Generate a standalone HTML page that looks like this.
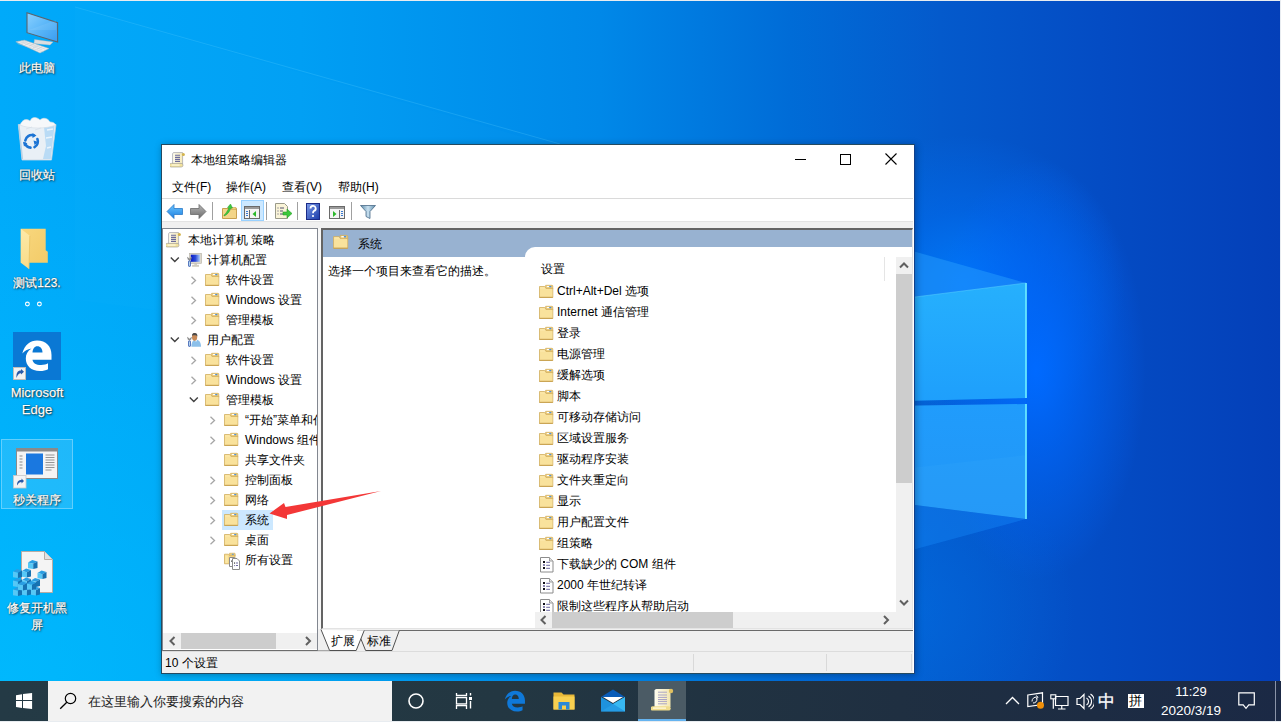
<!DOCTYPE html>
<html><head><meta charset="utf-8">
<style>
*{margin:0;padding:0;box-sizing:border-box}
html,body{width:1281px;height:722px;overflow:hidden}
body{position:relative;font-family:"Liberation Sans",sans-serif;font-size:12px;color:#000;background:#0070dc}
.a{position:absolute}
.t{position:absolute;white-space:nowrap;line-height:14px;font-size:12px;color:#000}
#bg{position:absolute;left:0;top:0;width:1281px;height:722px;
background:
radial-gradient(ellipse 110px 210px at 1036px 370px,rgba(0,106,255,1) 0%,rgba(0,102,250,0.6) 45%,rgba(0,90,230,0) 100%),
radial-gradient(ellipse 160px 150px at 965px 285px,rgba(0,124,255,0.9) 0%,rgba(0,112,248,0.45) 50%,rgba(0,90,230,0) 100%),
radial-gradient(ellipse 160px 160px at 915px 610px,rgba(0,112,230,0.45) 0%,rgba(0,100,220,0) 100%),
radial-gradient(ellipse 520px 560px at 0px 722px,rgba(0,195,255,0.6) 0%,rgba(0,190,255,0) 100%),
linear-gradient(to right,#00aafa 0px,#009ff4 300px,#0088e8 600px,#006cd7 790px,#045acc 940px,#044cc4 1100px,#043fb8 1281px);}
.dk{position:absolute;color:#fff;font-size:12px;line-height:17px;text-align:center;width:74px;left:0;text-shadow:0 0 1px rgba(0,0,0,.9),1px 1px 2px rgba(0,0,0,.8);-webkit-text-stroke:0.25px #fff}
#win{position:absolute;left:161px;top:144px;width:754px;height:530px;background:#fff;border:1px solid #244a60;border-right-color:#12408a;box-shadow:1px 1px 7px rgba(0,0,0,.3)}
#taskbar{position:absolute;left:0;top:681px;width:1281px;height:41px;background:linear-gradient(to right,#243a45 0px,#233742 500px,#1f2f41 900px,#1b2945 1281px)}
.row{position:absolute;height:20px;line-height:20px;white-space:nowrap;font-size:12px}
.lrow{position:absolute;height:21px;line-height:21px;white-space:nowrap;font-size:12px}
.tofu .c{letter-spacing:0.25em}
</style></head><body>
<svg width="0" height="0" style="position:absolute">
<defs>
 <symbol id="fold" viewBox="0 0 16 16">
  <path d="M7.6,1.3 h6.4 a0.8,0.8 0 0 1 0.8,0.8 v3 h-7.2z" fill="#eccb78" stroke="#d2ad5c" stroke-width="0.7"/>
  <rect x="8.8" y="2" width="2.6" height="1.1" fill="#fff"/><rect x="11.1" y="1.9" width="2.3" height="1.3" rx="0.6" fill="#4a90e0"/>
  <path d="M1.5,2.5 h5.2 l1.2,1.9 h6.9 v9.1 h-13.3z" fill="#f8df98" stroke="#d2ae5e" stroke-width="0.8"/>
  <path d="M2.1,3.1 h4.3 l1.2,1.9 h6.6 v8 h-12.1z" fill="#fbe6a6"/>
  <path d="M2.1,5 h12.1 v7.9 h-12.1z" fill="#f8dd92" fill-opacity="0.5"/>
  <path d="M1.4,13.3 h13.4" stroke="#c49c4a" stroke-width="0.9"/>
 </symbol>
 <symbol id="scroll" viewBox="0 0 16 16">
  <defs><linearGradient id="scg" x1="0" y1="0" x2="1" y2="0"><stop offset="0" stop-color="#fffdf0"/><stop offset="1" stop-color="#f6eab8"/></linearGradient></defs>
  <path d="M2.6,1.6 Q2.8,0.6 4,0.6 H12.6 V12 H2.6z" fill="url(#scg)" stroke="#a8a8b0" stroke-width="0.8"/>
  <circle cx="13.4" cy="2.4" r="1.5" fill="#d4b44c"/>
  <path d="M1.2,11.4 H11.2 a1.8,1.8 0 0 1 0,3.6 H1.2 a1.8,1.8 0 0 1 0,-3.6z" fill="#f2e29c" stroke="#a8a498" stroke-width="0.7"/>
  <rect x="1.6" y="12.5" width="8" height="1.1" fill="#fffbe6"/>
  <path d="M5,3.3 h5 M5,5.4 h5 M5,7.4 h5 M5,9.4 h5" stroke="#6a6a9a" stroke-width="1.1"/>
 </symbol>
 <symbol id="doc" viewBox="0 0 16 16">
  <path d="M2.5,0.5 H11.5 L15,4 V15 H2.5z" fill="#fff" stroke="#8c8c8c"/>
  <path d="M11.5,0.5 V4 H15" fill="#e4e4e4" stroke="#9c9c9c"/>
  <rect x="5" y="4" width="2" height="2" fill="#101018"/><rect x="5" y="7" width="2" height="2" fill="#8a86b0"/><rect x="5" y="10" width="2" height="2" fill="#101018"/>
  <path d="M8.2,5.3 h3.8 M8.2,8.3 h3.8 M8.2,11.3 h3.8" stroke="#6c68a0" stroke-width="1"/>
 </symbol>
</defs></svg>
<div id="bg"></div>
<svg class="a" style="left:0;top:0" width="1281" height="722" viewBox="0 0 1281 722">
  <defs>
    <linearGradient id="pt" x1="0" y1="0" x2="0" y2="1">
      <stop offset="0" stop-color="#26b0fd"/><stop offset="1" stop-color="#1e9ffc"/>
    </linearGradient>
    <linearGradient id="pb" x1="0" y1="0" x2="0" y2="1">
      <stop offset="0" stop-color="#209cfc"/><stop offset="1" stop-color="#2296f6"/>
    </linearGradient>
    <linearGradient id="ray" x1="0" y1="0" x2="1" y2="0">
      <stop offset="0" stop-color="#40c0ff" stop-opacity="0.0"/><stop offset="1" stop-color="#40b0ff" stop-opacity="0.35"/>
    </linearGradient>
  </defs>
  <polygon points="75,7 1026,283 1026,420 75,300" fill="#40c8ff" fill-opacity="0.035"/><line x1="75" y1="7" x2="560" y2="144" stroke="#6ad8ff" stroke-opacity="0.22" stroke-width="1"/>
  <polygon points="820,225 1026,283 820,309" fill="#2aa0ff" fill-opacity="0.45"/>
  <polygon points="820,493 1026,519 820,575" fill="#1a90ff" fill-opacity="0.35"/>
  <polygon points="820,309 1026,283 1026,398 820,403" fill="url(#pt)"/>
  <polygon points="820,407 1026,404 1026,519 820,493" fill="url(#pb)"/>
  <polygon points="820,478 1026,455 1026,519 820,493" fill="#40b8ff" fill-opacity="0.12"/>
  <line x1="1026" y1="283" x2="1026" y2="398" stroke="#66e6ff" stroke-width="1.8"/>
  <line x1="1026" y1="404" x2="1026" y2="519" stroke="#66e6ff" stroke-width="1.8"/>
  <line x1="820" y1="309" x2="1026" y2="283" stroke="#60d8ff" stroke-opacity="0.5" stroke-width="1"/>
</svg>
<div class="a" style="left:0;top:0;width:1281px;height:1px;background:#e8ecf0"></div>
<div class="a" style="left:1280px;top:0;width:1px;height:722px;background:#e8ecf0"></div>

<div id="win"></div>
<svg class="a" style="left:170px;top:152px" width="16" height="16"><use href="#scroll"/></svg>
<div class="t" style="left:191px;top:153px"><span class="c">本地组策略编辑器</span></div>
<div class="a" style="left:795px;top:159px;width:11px;height:1px;background:#000"></div>
<div class="a" style="left:840px;top:154px;width:11px;height:11px;border:1px solid #000"></div>
<svg class="a" style="left:885px;top:153px" width="12" height="12"><path d="M0.5,0.5 L11.5,11.5 M11.5,0.5 L0.5,11.5" stroke="#000" stroke-width="1.1"/></svg>
<div class="t" style="left:172px;top:180px"><span class="c">文件</span>(F)</div>
<div class="t" style="left:226px;top:180px"><span class="c">操作</span>(A)</div>
<div class="t" style="left:282px;top:180px"><span class="c">查看</span>(V)</div>
<div class="t" style="left:338px;top:180px"><span class="c">帮助</span>(H)</div>
<div class="a" style="left:162px;top:198px;width:751px;height:1px;background:#dadada"></div>
<div class="a" style="left:162px;top:221px;width:751px;height:1px;background:#e3e3e3"></div>
<div class="a" style="left:162px;top:222px;width:751px;height:451px;background:#f0f0f0"></div>
<div class="a" style="left:162px;top:228px;width:156px;height:423px;background:#fff;border:1px solid #828790;border-bottom-color:#6d6d6d"></div>
<div class="a" style="left:163px;top:229px;width:154px;height:404px;overflow:hidden">
<svg class="a" style="left:3px;top:3px" width="16" height="16"><use href="#scroll"/></svg>
<div class="row" style="left:25px;top:1px"><span class="c">本地计算机</span> <span class="c">策略</span></div>
<svg class="a" style="left:7px;top:27px" width="10" height="8"><path d="M0.8,1.5 L4.8,5.5 L8.8,1.5" fill="none" stroke="#404040" stroke-width="1.4"/></svg>
<svg class="a" style="left:22px;top:23px" width="17" height="16"><defs><linearGradient id="scrn" x1="0" y1="0" x2="1" y2="0"><stop offset="0" stop-color="#0a1ac8"/><stop offset="0.5" stop-color="#2a4ad8"/><stop offset="1" stop-color="#b0d0f8"/></linearGradient></defs><rect x="4.4" y="1.3" width="12.2" height="10" fill="#dcd8cc" stroke="#b4b0a4" stroke-width="0.6"/><rect x="5.8" y="2.7" width="9.2" height="7.1" fill="url(#scrn)"/><rect x="9.3" y="11.3" width="2.7" height="1.5" fill="#c8c4b8"/><rect x="7.1" y="12.8" width="6.9" height="2" fill="#d0ccc0"/><path d="M2,4.8 L2.8,7.5 L4.5,8.6 L6.2,7.5 L7,4.8 L5.8,5.6 L4.5,6.8 L3.2,5.6z" fill="#8a8a8a"/><rect x="3.2" y="8.6" width="2.6" height="6.2" rx="1.1" fill="#2f58b0"/><rect x="4.1" y="9.4" width="0.9" height="4.4" fill="#c8e4f8"/></svg>
<div class="row" style="left:44px;top:21px"><span class="c">计算机配置</span></div>
<svg class="a" style="left:27px;top:47px" width="8" height="9"><path d="M1.5,0.8 L5.5,4.5 L1.5,8.2" fill="none" stroke="#a6a6a6" stroke-width="1.3"/></svg>
<svg class="a" style="left:41px;top:43px" width="16" height="16"><use href="#fold"/></svg>
<div class="row" style="left:63px;top:41px"><span class="c">软件设置</span></div>
<svg class="a" style="left:27px;top:67px" width="8" height="9"><path d="M1.5,0.8 L5.5,4.5 L1.5,8.2" fill="none" stroke="#a6a6a6" stroke-width="1.3"/></svg>
<svg class="a" style="left:41px;top:63px" width="16" height="16"><use href="#fold"/></svg>
<div class="row" style="left:63px;top:61px">Windows <span class="c">设置</span></div>
<svg class="a" style="left:27px;top:87px" width="8" height="9"><path d="M1.5,0.8 L5.5,4.5 L1.5,8.2" fill="none" stroke="#a6a6a6" stroke-width="1.3"/></svg>
<svg class="a" style="left:41px;top:83px" width="16" height="16"><use href="#fold"/></svg>
<div class="row" style="left:63px;top:81px"><span class="c">管理模板</span></div>
<svg class="a" style="left:7px;top:107px" width="10" height="8"><path d="M0.8,1.5 L4.8,5.5 L8.8,1.5" fill="none" stroke="#404040" stroke-width="1.4"/></svg>
<svg class="a" style="left:22px;top:103px" width="17" height="16"><path d="M6.4,14.8 C6.4,10 8,7.8 11,7.8 C14,7.8 16,10 16,14.8z" fill="#8cc0ea"/><path d="M10,8 L11,10 L12,8z" fill="#fff"/><ellipse cx="9.6" cy="5" rx="2.6" ry="3.8" fill="#c88a58"/><path d="M7,3.8 C7,1.4 8.5,1 9.8,1 C11.5,1 12.6,2 12.4,4.6 C11.5,3.2 10,3 7,3.8z" fill="#4a4a4a"/><path d="M2,4.8 L2.8,7.5 L4.5,8.6 L6.2,7.5 L7,4.8 L5.8,5.6 L4.5,6.8 L3.2,5.6z" fill="#8a8a8a"/><rect x="3.2" y="8.6" width="2.6" height="6.2" rx="1.1" fill="#2f58b0"/><rect x="4.1" y="9.4" width="0.9" height="4.4" fill="#c8e4f8"/></svg>
<div class="row" style="left:44px;top:101px"><span class="c">用户配置</span></div>
<svg class="a" style="left:27px;top:127px" width="8" height="9"><path d="M1.5,0.8 L5.5,4.5 L1.5,8.2" fill="none" stroke="#a6a6a6" stroke-width="1.3"/></svg>
<svg class="a" style="left:41px;top:123px" width="16" height="16"><use href="#fold"/></svg>
<div class="row" style="left:63px;top:121px"><span class="c">软件设置</span></div>
<svg class="a" style="left:27px;top:147px" width="8" height="9"><path d="M1.5,0.8 L5.5,4.5 L1.5,8.2" fill="none" stroke="#a6a6a6" stroke-width="1.3"/></svg>
<svg class="a" style="left:41px;top:143px" width="16" height="16"><use href="#fold"/></svg>
<div class="row" style="left:63px;top:141px">Windows <span class="c">设置</span></div>
<svg class="a" style="left:26px;top:167px" width="10" height="8"><path d="M0.8,1.5 L4.8,5.5 L8.8,1.5" fill="none" stroke="#404040" stroke-width="1.4"/></svg>
<svg class="a" style="left:41px;top:163px" width="16" height="16"><use href="#fold"/></svg>
<div class="row" style="left:63px;top:161px"><span class="c">管理模板</span></div>
<svg class="a" style="left:46px;top:187px" width="8" height="9"><path d="M1.5,0.8 L5.5,4.5 L1.5,8.2" fill="none" stroke="#a6a6a6" stroke-width="1.3"/></svg>
<svg class="a" style="left:60px;top:183px" width="16" height="16"><use href="#fold"/></svg>
<div class="row" style="left:82px;top:181px">“<span class="c">开始</span>”<span class="c">菜单和任务栏</span></div>
<svg class="a" style="left:46px;top:207px" width="8" height="9"><path d="M1.5,0.8 L5.5,4.5 L1.5,8.2" fill="none" stroke="#a6a6a6" stroke-width="1.3"/></svg>
<svg class="a" style="left:60px;top:203px" width="16" height="16"><use href="#fold"/></svg>
<div class="row" style="left:82px;top:201px">Windows <span class="c">组件</span></div>
<svg class="a" style="left:60px;top:223px" width="16" height="16"><use href="#fold"/></svg>
<div class="row" style="left:82px;top:221px"><span class="c">共享文件夹</span></div>
<svg class="a" style="left:46px;top:247px" width="8" height="9"><path d="M1.5,0.8 L5.5,4.5 L1.5,8.2" fill="none" stroke="#a6a6a6" stroke-width="1.3"/></svg>
<svg class="a" style="left:60px;top:243px" width="16" height="16"><use href="#fold"/></svg>
<div class="row" style="left:82px;top:241px"><span class="c">控制面板</span></div>
<svg class="a" style="left:46px;top:267px" width="8" height="9"><path d="M1.5,0.8 L5.5,4.5 L1.5,8.2" fill="none" stroke="#a6a6a6" stroke-width="1.3"/></svg>
<svg class="a" style="left:60px;top:263px" width="16" height="16"><use href="#fold"/></svg>
<div class="row" style="left:82px;top:261px"><span class="c">网络</span></div>
<div class="a" style="left:59px;top:281px;width:51px;height:20px;background:#cce8ff"></div>
<svg class="a" style="left:46px;top:287px" width="8" height="9"><path d="M1.5,0.8 L5.5,4.5 L1.5,8.2" fill="none" stroke="#a6a6a6" stroke-width="1.3"/></svg>
<svg class="a" style="left:60px;top:283px" width="16" height="16"><use href="#fold"/></svg>
<div class="row" style="left:82px;top:281px"><span class="c">系统</span></div>
<svg class="a" style="left:46px;top:307px" width="8" height="9"><path d="M1.5,0.8 L5.5,4.5 L1.5,8.2" fill="none" stroke="#a6a6a6" stroke-width="1.3"/></svg>
<svg class="a" style="left:60px;top:303px" width="16" height="16"><use href="#fold"/></svg>
<div class="row" style="left:82px;top:301px"><span class="c">桌面</span></div>
<svg class="a" style="left:59px;top:323px" width="19" height="18"><path d="M2.5,2.2 h4 l1,1 h5.5 v8.6 h-10.5z" fill="#f6d98a" stroke="#d2ae5e" stroke-width="0.8"/><path d="M7.5,1.2 h5 a0.7,0.7 0 0 1 0.7,0.7 v1.8 h-5.7z" fill="#eccb78" stroke="#d2ae5e" stroke-width="0.6"/><rect x="9.8" y="1.7" width="2" height="1" rx="0.5" fill="#4a90e0"/><path d="M3.3,3.5 h2.5 v7.5 h-2.5z" fill="#fbe8a8"/><path d="M7.5,5.5 h5 v9 h-5z" fill="#fff" stroke="#8c8c8c"/><rect x="9" y="8.6" width="1" height="1" fill="#222"/><path d="M10.5,6.5 h4.5 l2.5,2.5 v8.5 h-7z" fill="#fff" stroke="#8c8c8c"/><rect x="12" y="10.5" width="1.1" height="1.1" fill="#222"/><rect x="12" y="13" width="1.1" height="1.1" fill="#8a86b0"/><path d="M14,11 h2 M14,13.5 h2" stroke="#6c68a0"/></svg>
<div class="row" style="left:82px;top:321px"><span class="c">所有设置</span></div>
</div>
<div class="a" style="left:163px;top:633px;width:154px;height:16px;background:#f0f0f0"></div>
<div class="a" style="left:181px;top:633px;width:95px;height:16px;background:#cdcdcd"></div>
<svg class="a" style="left:168px;top:636px" width="9" height="10"><path d="M6.5,1 L2.5,5 L6.5,9" fill="none" stroke="#606060" stroke-width="2"/></svg>
<svg class="a" style="left:304px;top:636px" width="9" height="10"><path d="M2,1 L6,5 L2,9" fill="none" stroke="#606060" stroke-width="2"/></svg>
<div class="a" style="left:318px;top:228px;width:3px;height:401px;background:#f7f7f7"></div>
<div class="a" style="left:321px;top:228px;width:592px;height:401px;background:#fff;border-top:2px solid #646464;border-left:2px solid #646464;border-bottom:1px solid #e3e3e3;border-right:1px solid #e3e3e3"></div>
<div class="a" style="left:323px;top:230px;width:589px;height:27px;background:#98b2d1"></div>
<svg class="a" style="left:332px;top:234px" width="17" height="17"><use href="#fold"/></svg>
<div class="t" style="left:358px;top:237px"><span class="c">系统</span></div>
<div class="t" style="left:328px;top:264px"><span class="c">选择一个项目来查看它的描述。</span></div>
<div class="a" style="left:525px;top:247px;width:387px;height:381px;background:#fff;border-top-left-radius:10px"></div>
<div class="t" style="left:541px;top:262px"><span class="c">设置</span></div>
<div class="a" style="left:884px;top:257px;width:1px;height:24px;background:#e5e5e5"></div>
<div class="a" style="left:535px;top:281px;width:361px;height:331px;overflow:hidden">
<svg class="a" style="left:3px;top:3px" width="16" height="16"><use href="#fold"/></svg>
<div class="lrow" style="left:22px;top:0px">Ctrl+Alt+Del <span class="c">选项</span></div>
<svg class="a" style="left:3px;top:24px" width="16" height="16"><use href="#fold"/></svg>
<div class="lrow" style="left:22px;top:21px">Internet <span class="c">通信管理</span></div>
<svg class="a" style="left:3px;top:45px" width="16" height="16"><use href="#fold"/></svg>
<div class="lrow" style="left:22px;top:42px"><span class="c">登录</span></div>
<svg class="a" style="left:3px;top:66px" width="16" height="16"><use href="#fold"/></svg>
<div class="lrow" style="left:22px;top:63px"><span class="c">电源管理</span></div>
<svg class="a" style="left:3px;top:87px" width="16" height="16"><use href="#fold"/></svg>
<div class="lrow" style="left:22px;top:84px"><span class="c">缓解选项</span></div>
<svg class="a" style="left:3px;top:108px" width="16" height="16"><use href="#fold"/></svg>
<div class="lrow" style="left:22px;top:105px"><span class="c">脚本</span></div>
<svg class="a" style="left:3px;top:129px" width="16" height="16"><use href="#fold"/></svg>
<div class="lrow" style="left:22px;top:126px"><span class="c">可移动存储访问</span></div>
<svg class="a" style="left:3px;top:150px" width="16" height="16"><use href="#fold"/></svg>
<div class="lrow" style="left:22px;top:147px"><span class="c">区域设置服务</span></div>
<svg class="a" style="left:3px;top:171px" width="16" height="16"><use href="#fold"/></svg>
<div class="lrow" style="left:22px;top:168px"><span class="c">驱动程序安装</span></div>
<svg class="a" style="left:3px;top:192px" width="16" height="16"><use href="#fold"/></svg>
<div class="lrow" style="left:22px;top:189px"><span class="c">文件夹重定向</span></div>
<svg class="a" style="left:3px;top:213px" width="16" height="16"><use href="#fold"/></svg>
<div class="lrow" style="left:22px;top:210px"><span class="c">显示</span></div>
<svg class="a" style="left:3px;top:234px" width="16" height="16"><use href="#fold"/></svg>
<div class="lrow" style="left:22px;top:231px"><span class="c">用户配置文件</span></div>
<svg class="a" style="left:3px;top:255px" width="16" height="16"><use href="#fold"/></svg>
<div class="lrow" style="left:22px;top:252px"><span class="c">组策略</span></div>
<svg class="a" style="left:3px;top:276px" width="16" height="16"><use href="#doc"/></svg>
<div class="lrow" style="left:22px;top:273px"><span class="c">下载缺少的</span> COM <span class="c">组件</span></div>
<svg class="a" style="left:3px;top:297px" width="16" height="16"><use href="#doc"/></svg>
<div class="lrow" style="left:22px;top:294px">2000 <span class="c">年世纪转译</span></div>
<svg class="a" style="left:3px;top:318px" width="16" height="16"><use href="#doc"/></svg>
<div class="lrow" style="left:22px;top:315px"><span class="c">限制这些程序从帮助启动</span></div>
</div>
<div class="a" style="left:896px;top:257px;width:16px;height:355px;background:#f0f0f0"></div>
<div class="a" style="left:896px;top:274px;width:16px;height:209px;background:#cdcdcd"></div>
<svg class="a" style="left:899px;top:261px" width="10" height="8"><path d="M1,6.5 L5,2.5 L9,6.5" fill="none" stroke="#606060" stroke-width="2"/></svg>
<svg class="a" style="left:899px;top:599px" width="10" height="8"><path d="M1,1.5 L5,5.5 L9,1.5" fill="none" stroke="#606060" stroke-width="2"/></svg>
<div class="a" style="left:535px;top:612px;width:377px;height:16px;background:#f0f0f0"></div>
<div class="a" style="left:552px;top:612px;width:181px;height:16px;background:#cdcdcd"></div>
<svg class="a" style="left:539px;top:615px" width="9" height="10"><path d="M6.5,1 L2.5,5 L6.5,9" fill="none" stroke="#606060" stroke-width="2"/></svg>
<svg class="a" style="left:882px;top:615px" width="9" height="10"><path d="M2,1 L6,5 L2,9" fill="none" stroke="#606060" stroke-width="2"/></svg>
<svg class="a" style="left:318px;top:628px" width="595" height="24"><path d="M40,2.5 H595" stroke="#6a6a6a" stroke-width="1"/><path d="M0,22.5 H12" stroke="#a8a8a8"/><path d="M39.5,2.5 L47.6,22.5 L74,22.5 L81.3,2.5" fill="#f0f0f0" stroke="#505050" stroke-width="1"/><path d="M3,2 L11.6,22.5 L38.2,22.5 L46.2,2.5z" fill="#fff"/><path d="M3,1.5 L11.6,22.5 L38.2,22.5 L46.2,2.5" fill="none" stroke="#505050" stroke-width="1"/></svg>
<div class="t" style="left:331px;top:634px"><span class="c">扩展</span></div>
<div class="t" style="left:367px;top:634px"><span class="c">标准</span></div>
<div class="a" style="left:162px;top:651px;width:751px;height:1px;background:#dcdcdc"></div>
<div class="t" style="left:165px;top:656px">10 <span class="c">个设置</span></div>
<div class="a" style="left:693px;top:654px;width:1px;height:17px;background:#d9d9d9"></div>
<div class="a" style="left:826px;top:654px;width:1px;height:17px;background:#d9d9d9"></div>
<div class="a" style="left:911px;top:654px;width:1px;height:17px;background:#d9d9d9"></div>
<div class="a" style="left:241px;top:200px;width:23px;height:21px;background:#cce8ff;border:1px solid #99d1ff"></div>
<div class="a" style="left:212px;top:202px;width:1px;height:18px;background:#a0a0a0"></div>
<div class="a" style="left:266px;top:202px;width:1px;height:18px;background:#a0a0a0"></div>
<div class="a" style="left:297px;top:202px;width:1px;height:18px;background:#a0a0a0"></div>
<div class="a" style="left:351px;top:202px;width:1px;height:18px;background:#a0a0a0"></div>
<svg class="a" style="left:166px;top:203px" width="18" height="17"><defs><linearGradient id="bk" x1="0" y1="0" x2="0" y2="1"><stop offset="0" stop-color="#6cc6ff"/><stop offset="1" stop-color="#1a7ee0"/></linearGradient></defs><path d="M1,8.5 L8,1.5 V5.5 H16.5 V11.5 H8 V15.5z" fill="url(#bk)" stroke="#2a78c8" stroke-width="0.8"/></svg>
<svg class="a" style="left:189px;top:203px" width="18" height="17"><defs><linearGradient id="fw" x1="0" y1="0" x2="0" y2="1"><stop offset="0" stop-color="#b8b8b8"/><stop offset="1" stop-color="#6a6a6a"/></linearGradient></defs><path d="M17,8.5 L10,1.5 V5.5 H1.5 V11.5 H10 V15.5z" fill="url(#fw)" stroke="#6a6a6a" stroke-width="0.8"/></svg>
<svg class="a" style="left:221px;top:203px" width="17" height="17"><path d="M1.5,5.5 h14 v10 h-14z" fill="#f3d588" stroke="#c8a050"/><path d="M10,4.5 h5 v2 h-5z" fill="#f0cf78" stroke="#c8a050" stroke-width="0.6"/><path d="M3,12 C5,11 6,8 8,5 L6.5,4.5 L9.5,1 L11.5,5 L9.8,5.2 C8.5,9 6,12 3,13z" fill="#3cc83c" stroke="#2a9a2a" stroke-width="0.5"/></svg>
<svg class="a" style="left:244px;top:206px" width="17" height="14"><rect x="0.5" y="0.5" width="15" height="12" fill="#f4f4f4" stroke="#6a6a6a"/><rect x="1" y="1" width="14" height="2" fill="#9a9a9a"/><path d="M5.5,4 v8.5" stroke="#6a6a6a"/><path d="M2,5.5 h2 M2,7.5 h2 M2,9.5 h2" stroke="#3a7ad0"/><path d="M12,5 L8.5,8 L12,11z" fill="#2ab82a"/></svg>
<svg class="a" style="left:274px;top:202px" width="19" height="18"><path d="M1.5,1.5 h9 l3,3 v12 h-12z" fill="#faf4d8" stroke="#9a9a8a"/><path d="M3.5,6 h1 M6,6 h4 M3.5,9 h1 M6,9 h3 M3.5,12 h1 M6,12 h3" stroke="#505070"/><path d="M9,10 h4 v-3 l5,4.5 l-5,4.5 v-3 h-4z" fill="#3cc83c" stroke="#2a9a2a" stroke-width="0.6"/></svg>
<svg class="a" style="left:306px;top:203px" width="15" height="17"><defs><linearGradient id="hp" x1="0" y1="0" x2="1" y2="1"><stop offset="0" stop-color="#7a9ae8"/><stop offset="1" stop-color="#1a3aa8"/></linearGradient></defs><rect x="0.5" y="0.5" width="13" height="16" fill="url(#hp)" stroke="#1a2a88"/><path d="M4.5,5.5 a2.6,2.6 0 1 1 3.5,2.4 c-0.8,0.4 -1,1 -1,2.3" fill="none" stroke="#fff" stroke-width="1.8"/><circle cx="7" cy="13" r="1.1" fill="#fff"/></svg>
<svg class="a" style="left:329px;top:206px" width="17" height="14"><rect x="0.5" y="0.5" width="15" height="12" fill="#f4f4f4" stroke="#6a6a6a"/><rect x="1" y="1" width="14" height="2" fill="#9a9a9a"/><path d="M10.5,4 v8.5" stroke="#6a6a6a"/><path d="M12,5.5 h2 M12,7.5 h2 M12,9.5 h2" stroke="#3a7ad0"/><path d="M4,5 L7.5,8 L4,11z" fill="#2ab82a"/></svg>
<svg class="a" style="left:360px;top:204px" width="17" height="16"><defs><linearGradient id="fl" x1="0" y1="0" x2="1" y2="0"><stop offset="0" stop-color="#5a8aa8"/><stop offset="0.5" stop-color="#c8e0f0"/><stop offset="1" stop-color="#5a8aa8"/></linearGradient></defs><path d="M0.5,1.5 h15 l-5.5,6 v7 l-4,-2 v-5z" fill="url(#fl)" stroke="#4a6a88" stroke-width="0.8"/></svg>
<svg class="a" style="left:0;top:0" width="1281" height="722"><polygon points="269.5,513.5 284,503 285.5,507 381,491 287,515 287,519" fill="#f33737"/></svg>
<svg class="a" style="left:13px;top:10px" width="48" height="46"><defs><linearGradient id="scr" x1="0" y1="0" x2="1" y2="1"><stop offset="0" stop-color="#8ad0ff"/><stop offset="0.55" stop-color="#56b4f8"/><stop offset="1" stop-color="#3a9cf0"/></linearGradient></defs><path d="M14,2.7 L44.6,12.7 V32 L14,22.7z" fill="url(#scr)" stroke="#5a646e" stroke-width="1.1"/><path d="M16,20 L43,10 V20z" fill="#fff" fill-opacity="0.08"/><path d="M21.5,29.5 L40,32 L37,35 L21,33.5z" fill="#dcdee0" stroke="#b8bcc0" stroke-width="0.4"/><path d="M2.8,31.8 L11.5,30.2 L36,38.5 L27,43 z" fill="#eceef0" stroke="#b0b4b8" stroke-width="0.5"/><path d="M5.5,31.3 L29.5,40 M8.2,30.8 L32.5,39.2 M4.5,33.5 L30.5,42 M14,31 L8.5,33.5 M18,32.3 L12,35 M22,33.6 L16,36.3 M26,35 L20,37.8 M30,36.4 L24,39.2" stroke="#c4c8cc" stroke-width="0.5"/></svg>
<div class="dk" style="top:60px"><span class="c">此电脑</span></div>
<svg class="a" style="left:17px;top:116px" width="42" height="46"><path d="M1.3,8.5 L39,8.5 L34.5,44 L5,44z" fill="#e9f0f6" stroke="#c4d4e2" stroke-width="0.8"/><path d="M27,11 L37.5,10 L33.8,43 L26,43 L29,30z" fill="#a8d4f4" fill-opacity="0.75"/><path d="M30,14 L36,13 M29,22 L35,21 M30,32 L34,31" stroke="#fff" stroke-opacity="0.7" stroke-width="1.5"/><path d="M3,9 C5,4 9,2 13,5 C15,0 20,1 23,4 C26,1 31,2 33,6 C36,6 38,7 38.5,9 C30,13 12,13 3,9z" fill="#f6f8fa" stroke="#d4dce4" stroke-width="0.6"/><path d="M9,13 L15,11 M18,14 L24,12" stroke="#d8e0e8" stroke-width="0.8"/><path d="M2,9 L5.5,43" stroke="#b8d0e4" stroke-width="1.2"/><g fill="none" stroke="#1c74d4" stroke-width="2.6" stroke-linecap="round"><path d="M8.3,24.5 A6.5,6.5 0 0 1 16.5,19.3"/><path d="M20.4,23 A6.5,6.5 0 0 1 17.5,31.2"/><path d="M13.5,31.6 A6.5,6.5 0 0 1 8,27.5"/></g><path d="M15.5,17 L19.5,19.5 L15.5,22z M21.8,26 L17.6,29 L16.5,24.6z M7,30.5 L6,25.8 L10.4,27.2z" fill="#1c74d4"/></svg>
<div class="dk" style="top:167px"><span class="c">回收站</span></div>
<svg class="a" style="left:19px;top:227px" width="31" height="44"><defs><linearGradient id="dfb" x1="0" y1="0" x2="1" y2="1"><stop offset="0" stop-color="#f8d77e"/><stop offset="1" stop-color="#f3cb68"/></linearGradient><linearGradient id="dff" x1="0" y1="0" x2="0" y2="1"><stop offset="0" stop-color="#fde9a8"/><stop offset="1" stop-color="#f9dc88"/></linearGradient></defs><path d="M1.8,1.8 H26.7 V23.3 L28.8,24.8 V35.7 H1.8z" fill="url(#dfb)"/><path d="M1.8,1.8 L10.8,8.8 L10,42 L1.8,35.7z" fill="url(#dff)"/><path d="M10.8,8.8 L10,42" stroke="#e6bf5c" stroke-width="0.7"/></svg>
<div class="dk" style="top:275px"><span class="c">测试</span>123.</div>
<svg class="a" style="left:23px;top:299px" width="22" height="9"><circle cx="4.4" cy="5" r="1.9" fill="none" stroke="#fff" stroke-width="1.1"/><circle cx="16.4" cy="5" r="1.9" fill="none" stroke="#fff" stroke-width="1.1"/></svg>
<div class="a" style="left:13px;top:332px;width:48px;height:48px;background:#0a78d4"></div>
<svg class="a" style="left:13px;top:332px" width="48" height="48"><path fill-rule="evenodd" d="M9.3,21.6 C11.5,13 17.5,8.6 24,8.6 C33,8.6 38.5,14.5 38.5,23 V27.7 H19.5 C20,31 23,33 28,33 C31,33 33.5,32.3 35,31.3 V37.2 C33,38.4 30,39 27,39 C18,39 12.8,33.5 12.8,26.5 C12.8,22.5 14.5,19 18.5,16.5 C14.5,17 11.5,19 9.3,21.6 Z M19.5,20.6 H29.5 C29.5,16.8 27.5,14.3 24.3,14.3 C21.5,14.3 19.7,16.8 19.5,20.6 Z" fill="#fff"/><rect x="0.5" y="35.5" width="12" height="12" fill="#f2f2f2" stroke="#c8c0b8" stroke-width="0.9"/><path d="M3.5,46 C3,41 4.5,38.5 8,38.5 V37 L11,39.8 L8,42.6 V41.2 C5.8,41.2 4.5,43 3.5,46z" fill="#2a5aa8"/></svg>
<div class="dk" style="top:384px;font-size:13px">Microsoft<br>Edge</div>
<div class="a" style="left:1px;top:439px;width:72px;height:70px;background:rgba(255,255,255,0.12);border:1px solid rgba(255,255,255,0.3)"></div>
<svg class="a" style="left:13px;top:447px" width="46" height="42"><rect x="3.5" y="1.5" width="41" height="30" fill="#f4f4f4" stroke="#8a8a8a"/><rect x="4" y="2" width="40" height="2.5" fill="#8a8a8a"/><rect x="13" y="6.5" width="17" height="21" fill="#1a78e0"/><path d="M6.5,9 h3 M6.5,12 h3 M6.5,15 h3 M6.5,18 h3 M6.5,21 h3" stroke="#8a8a8a" stroke-width="1"/><path d="M32.5,8 h9 M32.5,10.5 h9 M32.5,13 h9 M32.5,15.5 h9 M32.5,18 h9 M32.5,20.5 h9 M32.5,23 h6" stroke="#8a8a8a" stroke-width="0.9"/><rect x="0.5" y="28.5" width="12.5" height="12.5" fill="#f4f4f4" stroke="#c8c8c8" stroke-width="0.8"/><path d="M4,38.5 C4,34.5 5.5,33 8.5,33 V31.5 L11,34 L8.5,36.5 V35 C6.5,35 5.5,36 4,38.5z" fill="#2a5aa8"/></svg>
<div class="dk" style="top:492px"><span class="c">秒关程序</span></div>
<svg class="a" style="left:10px;top:548px" width="46" height="50"><path d="M11.5,3.5 H34.5 L42.5,11.5 V44.5 H11.5z" fill="#f4f4f4" stroke="#b8aca4"/><path d="M34.5,3.5 V11.5 H42.5" fill="#e2e2e2" stroke="#b8aca4"/><path d="M3,23.5 L7.05,21 L12,22.5 L7.95,24.75z" fill="#2a9ee2"/><path d="M3,23.5 L7.95,24.75 V30 L3,29.2z" fill="#56c8f6"/><path d="M7.95,24.75 L12,22.5 V29 L7.95,30z" fill="#1672b2"/><path d="M12,23.0 L16.05,20.5 L21,22.0 L16.95,24.25z" fill="#2a9ee2"/><path d="M12,23.0 L16.95,24.25 V29.5 L12,28.7z" fill="#56c8f6"/><path d="M16.95,24.25 L21,22.0 V28.5 L16.95,29.5z" fill="#1672b2"/><path d="M3,32.5 L7.05,30 L12,31.5 L7.95,33.75z" fill="#2a9ee2"/><path d="M3,32.5 L7.95,33.75 V39 L3,38.2z" fill="#56c8f6"/><path d="M7.95,33.75 L12,31.5 V38 L7.95,39z" fill="#1672b2"/><path d="M12,32.0 L16.05,29.5 L21,31.0 L16.95,33.25z" fill="#2a9ee2"/><path d="M12,32.0 L16.95,33.25 V38.5 L12,37.7z" fill="#56c8f6"/><path d="M16.95,33.25 L21,31.0 V37.5 L16.95,38.5z" fill="#1672b2"/><path d="M21,32.5 L25.05,30 L30,31.5 L25.95,33.75z" fill="#2a9ee2"/><path d="M21,32.5 L25.95,33.75 V39 L21,38.2z" fill="#56c8f6"/><path d="M25.95,33.75 L30,31.5 V38 L25.95,39z" fill="#1672b2"/><path d="M3,41.5 L7.05,39 L12,40.5 L7.95,42.75z" fill="#2a9ee2"/><path d="M3,41.5 L7.95,42.75 V48 L3,47.2z" fill="#56c8f6"/><path d="M7.95,42.75 L12,40.5 V47 L7.95,48z" fill="#1672b2"/><path d="M12,41.0 L16.05,38.5 L21,40.0 L16.95,42.25z" fill="#2a9ee2"/><path d="M12,41.0 L16.95,42.25 V47.5 L12,46.7z" fill="#56c8f6"/><path d="M16.95,42.25 L21,40.0 V46.5 L16.95,47.5z" fill="#1672b2"/><path d="M21,41.0 L25.05,38.5 L30,40.0 L25.95,42.25z" fill="#2a9ee2"/><path d="M21,41.0 L25.95,42.25 V47.5 L21,46.7z" fill="#56c8f6"/><path d="M25.95,42.25 L30,40.0 V46.5 L25.95,47.5z" fill="#1672b2"/><path d="M8,36.0 L12.05,33.5 L17,35.0 L12.95,37.25z" fill="#2a9ee2"/><path d="M8,36.0 L12.95,37.25 V42.5 L8,41.7z" fill="#56c8f6"/><path d="M12.95,37.25 L17,35.0 V41.5 L12.95,42.5z" fill="#1672b2"/><path d="M17,35.5 L21.05,33 L26,34.5 L21.95,36.75z" fill="#2a9ee2"/><path d="M17,35.5 L21.95,36.75 V42 L17,41.2z" fill="#56c8f6"/><path d="M21.95,36.75 L26,34.5 V41 L21.95,42z" fill="#1672b2"/><path d="M18,14.5 L22.275,12 L27.5,13.5 L23.225,15.75z" fill="#2a9ee2"/><path d="M18,14.5 L23.225,15.75 V21 L18,20.2z" fill="#56c8f6"/><path d="M23.225,15.75 L27.5,13.5 V20 L23.225,21z" fill="#1672b2"/><path d="M27.5,25.0 L31.55,22.5 L36.5,24.0 L32.45,26.25z" fill="#2a9ee2"/><path d="M27.5,25.0 L32.45,26.25 V31.0 L27.5,30.2z" fill="#56c8f6"/><path d="M32.45,26.25 L36.5,24.0 V30.0 L32.45,31.0z" fill="#1672b2"/></svg>
<div class="dk" style="top:600px"><span class="c">修复开机黑</span><br><span class="c">屏</span></div>
<div id="taskbar"></div>
<svg class="a" style="left:15px;top:692px" width="18" height="18"><path d="M1,3.2 L7,2.2 V8 H1z M8,2 L17.1,1 V8 H8z M1,9 H7 V16 L1,15z M8,9 H17.1 V17 L8,16.1z" fill="#fff"/></svg>
<div class="a" style="left:48px;top:681px;width:344px;height:40px;background:#f2f2f2"></div>
<svg class="a" style="left:59px;top:692px" width="19" height="19"><circle cx="11.5" cy="6.5" r="5.2" fill="none" stroke="#000" stroke-width="1.2"/><path d="M7.8,10.2 L1.2,16.8" stroke="#000" stroke-width="1.3"/></svg>
<div class="t" style="left:88px;top:695px;color:#222;font-size:13px;line-height:14px"><span class="c">在这里输入你要搜索的内容</span></div>
<svg class="a" style="left:407px;top:692px" width="18" height="18"><circle cx="9" cy="9" r="7" fill="none" stroke="#fff" stroke-width="1.6"/></svg>
<svg class="a" style="left:455px;top:692px" width="18" height="18"><path d="M1.5,1 V3.5 H11.5 V1 M1.5,17 V13.5 H11.5 V17" fill="none" stroke="#fff" stroke-width="1.3"/><rect x="1.5" y="5.6" width="10" height="6.3" fill="none" stroke="#fff" stroke-width="1.3"/><path d="M15.5,1 V3.5 M15.5,9 V16.5" stroke="#fff" stroke-width="1.4"/><rect x="14" y="5" width="3" height="3" fill="#fff"/></svg>
<svg class="a" style="left:0;top:0" width="540" height="722"><path fill-rule="evenodd" transform="translate(498.4,684.7) scale(0.69)" d="M9.3,21.6 C11.5,13 17.5,8.6 24,8.6 C33,8.6 38.5,14.5 38.5,23 V27.7 H19.5 C20,31 23,33 28,33 C31,33 33.5,32.3 35,31.3 V37.2 C33,38.4 30,39 27,39 C18,39 12.8,33.5 12.8,26.5 C12.8,22.5 14.5,19 18.5,16.5 C14.5,17 11.5,19 9.3,21.6 Z M19.5,20.6 H29.5 C29.5,16.8 27.5,14.3 24.3,14.3 C21.5,14.3 19.7,16.8 19.5,20.6 Z" fill="#0f78d8"/></svg>
<svg class="a" style="left:553px;top:691px" width="22" height="19"><path d="M0.5,1.5 h8 l2,2 h11 v15 h-21z" fill="#e8b838"/><path d="M0.5,5.5 h21 v13 h-21z" fill="#f8d050"/><path d="M5.5,11 h11 v7.5 h-3.5 v-4 h-4 v4 h-3.5z" fill="#2a88d8"/></svg>
<svg class="a" style="left:601px;top:689px" width="25" height="23"><path d="M0,8 L12,0.5 L24,8z" fill="#0a5cb8"/><path d="M2,8 H22 L12,14z" fill="#fff"/><path d="M0,8 L12,15 L24,8 V22.5 H0z" fill="#1e92de"/><path d="M12,15 L24,8 V22.5z" fill="#38b8f2"/><path d="M0,22.5 L12,15 L24,22.5z" fill="#2aa4ea" fill-opacity="0.6"/></svg>
<div class="a" style="left:638px;top:681px;width:48px;height:40px;background:#4b5b65"></div>
<div class="a" style="left:638px;top:719px;width:48px;height:2px;background:#66b4f0"></div>
<svg class="a" style="left:651px;top:688px" width="24" height="24"><defs><linearGradient id="scg2" x1="0" y1="0" x2="1" y2="0"><stop offset="0" stop-color="#fffdf0"/><stop offset="1" stop-color="#f3e6b0"/></linearGradient></defs><path d="M3.5,2.5 Q3.8,1 5.5,1 H19.5 V19 H3.5z" fill="url(#scg2)"/><circle cx="20" cy="3" r="2.2" fill="#e0c060"/><path d="M1.8,18.2 H17.5 a2.2,2.2 0 0 1 0,4.4 H1.8 a2.2,2.2 0 0 1 0,-4.4z" fill="#f0dc8c"/><rect x="2" y="19.4" width="13" height="1.4" fill="#fff8d8"/><path d="M7,4.2 h9 M7,7 h9 M7,9.4 h9 M7,11.5 h9 M7,13.4 h9 M7,15.8 h9" stroke="#aaa4c4" stroke-width="1"/></svg>
<svg class="a" style="left:1005px;top:696px" width="15" height="9"><path d="M1,8 L7.5,1.5 L14,8" fill="none" stroke="#fff" stroke-width="1.3"/></svg>
<svg class="a" style="left:1027px;top:692px" width="20" height="17"><path d="M0.8,3 L15.5,0.8 V12.5 L0.8,14.5z" fill="none" stroke="#fff" stroke-width="1.2"/><path d="M5,9.5 C5,6.5 7,5 10,5 M11,5.5 L9.5,3.5 M11,5.5 L9,7 M10,7 C10,9.5 8.5,11 6,11" fill="none" stroke="#fff" stroke-width="1"/><circle cx="13.5" cy="13.3" r="3.5" fill="#f0900a"/></svg>
<svg class="a" style="left:1050px;top:694px" width="19" height="16"><path d="M5.5,2.5 h12.5 v9 h-12.5z M11.75,11.5 v3 M8,15 h7.5" fill="none" stroke="#fff" stroke-width="1.2"/><rect x="0.8" y="0.8" width="5" height="4" fill="none" stroke="#fff" stroke-width="1.1"/><path d="M3.3,4.8 v10" stroke="#fff" stroke-width="1.2"/></svg>
<svg class="a" style="left:1076px;top:693px" width="18" height="17"><path d="M1,5.5 h3 l4,-4 v14 l-4,-4 h-3z" fill="none" stroke="#fff" stroke-width="1.2"/><path d="M10.5,5 a4,4 0 0 1 0,7 M12.5,3 a6.5,6.5 0 0 1 0,11 M14.5,1 a9,9 0 0 1 0,15" fill="none" stroke="#fff" stroke-width="1.1"/></svg>
<div class="a" style="left:1098px;top:693px;color:#fff;font-size:17px;line-height:18px;-webkit-text-stroke:0.3px #fff"><span class="c">中</span></div>
<div class="a" style="left:1128px;top:694px;width:16px;height:14px;background:#fff"></div>
<div class="a" style="left:1129px;top:694px;color:#000;font-size:13px;line-height:14px"><span class="c">拼</span></div>
<div class="a" style="left:1155px;top:684px;width:72px;text-align:center;color:#fff;font-size:13px;line-height:15px">11:29</div>
<div class="a" style="left:1155px;top:703px;width:72px;text-align:center;color:#fff;font-size:13.5px;line-height:15px">2020/3/19</div>
<svg class="a" style="left:1238px;top:692px" width="18" height="18"><path d="M0.8,0.8 h15.5 v12 h-5.5 l-2.8,3.5 l-2.8,-3.5 h-4.4z" fill="none" stroke="#fff" stroke-width="1.2"/></svg>
<div class="a" style="left:1275px;top:681px;width:1px;height:40px;background:#8a94a8"></div>
<div class="a" style="left:0;top:721px;width:1281px;height:1px;background:#e8ecf0"></div>
<script>(function(){var s=document.createElement("span");s.style.cssText="position:absolute;left:-9999px;top:0;font-size:100px;white-space:nowrap;font-family:'Liberation Sans',sans-serif";s.textContent="\u4e2d\u6587\u5b57";document.body.appendChild(s);var w=s.getBoundingClientRect().width;document.body.removeChild(s);if(w>0&&w<270){document.body.className+=" tofu";}})();</script>
</body></html>
